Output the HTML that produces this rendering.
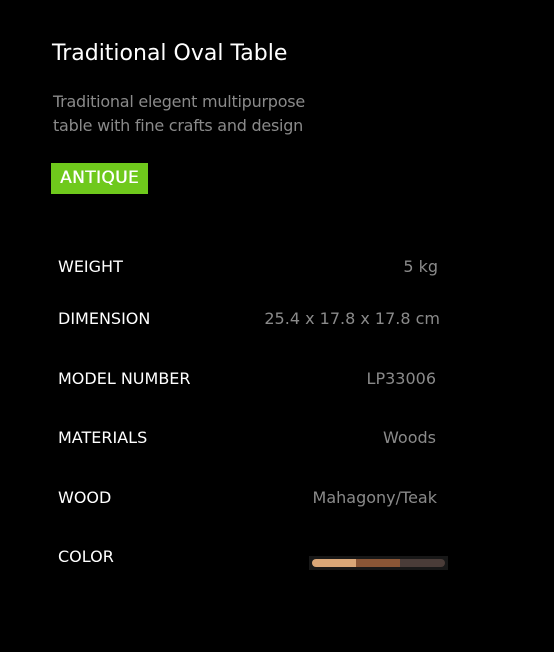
<!DOCTYPE html>
<html><head><style>
body{margin:0;width:554px;height:652px;background:#000;font-family:"DejaVu Sans",sans-serif;position:relative;overflow:hidden}
.a{position:absolute;white-space:nowrap}
.t{left:52px;top:41px;font-size:22px;color:#fff}
.d{left:53px;top:90px;font-size:16px;color:#8a8a8a;line-height:24px;letter-spacing:-0.25px}
.b{left:51px;top:163px;width:97px;height:31px;background:#6fc91c;color:#fff;font-size:17px;line-height:31px;text-align:center;letter-spacing:0.4px;text-shadow:0.4px 0 0 #fff}
.l{left:58px;font-size:16px;color:#fff}
.v{right:115px;font-size:16px;color:#8a8a8a;text-align:right}
</style></head><body>
<div class="a t">Traditional Oval Table</div>
<div class="a d">Traditional elegent multipurpose<br>table with fine crafts and design</div>
<div class="a b">ANTIQUE</div>
<div class="a l" style="top:257px">WEIGHT</div><div class="a v" style="top:257px;right:116px">5 kg</div>
<div class="a l" style="top:309px">DIMENSION</div><div class="a v" style="top:309px;right:114px">25.4 x 17.8 x 17.8 cm</div>
<div class="a l" style="top:369px">MODEL NUMBER</div><div class="a v" style="top:369px;right:118px">LP33006</div>
<div class="a l" style="top:428px">MATERIALS</div><div class="a v" style="top:428px;right:118px">Woods</div>
<div class="a l" style="top:488px">WOOD</div><div class="a v" style="top:488px;right:117px">Mahagony/Teak</div>
<div class="a l" style="top:547px">COLOR</div>
<div class="a" style="left:309px;top:556px;width:139px;height:14px;background:#181818"></div>
<div class="a" style="left:312px;top:559px;width:133px;height:8px;border-radius:4px;overflow:hidden;display:flex">
<div style="width:44px;background:#d9a677"></div><div style="width:44px;background:#8a5636"></div><div style="flex:1;background:#4a3c38"></div></div>
</body></html>
